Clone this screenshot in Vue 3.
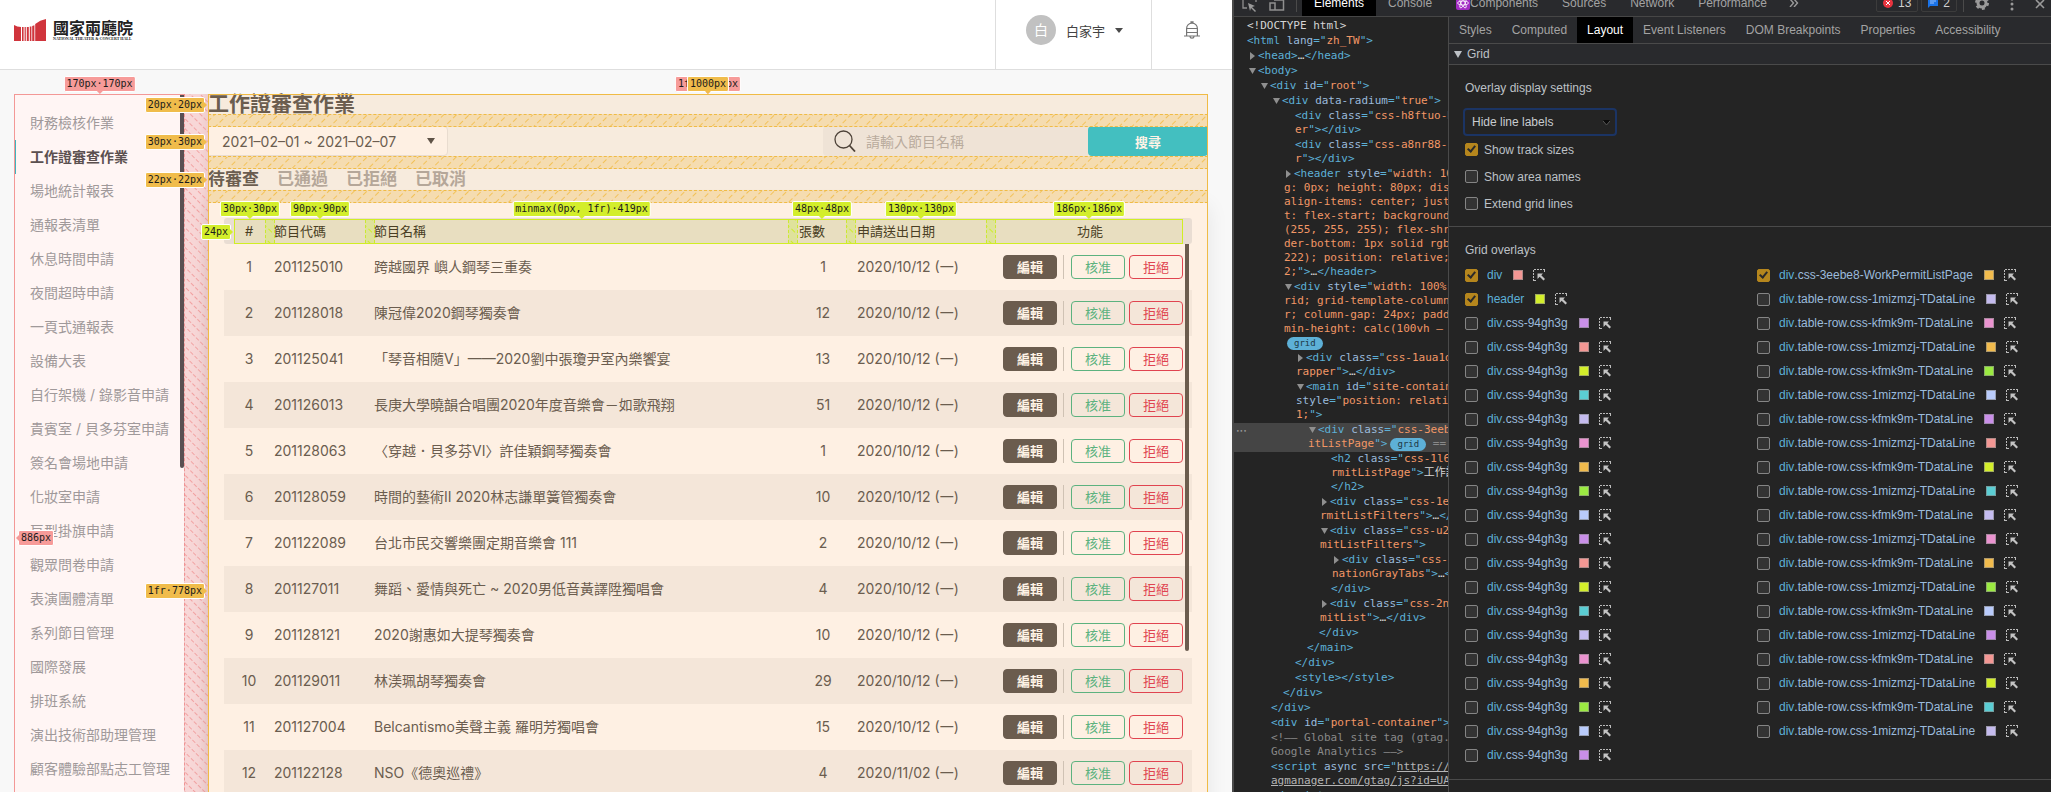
<template>
  <div class="screen">
    <svg class="defs" width="0" height="0" aria-hidden="true">
      <defs>
        <pattern id="hatch-orange" width="9" height="8" patternUnits="userSpaceOnUse" patternTransform="rotate(45)">
          <path d="M4.5 0V5" stroke="#f2c25a" stroke-width="1" />
        </pattern>
        <pattern id="hatch-red" width="7" height="6" patternUnits="userSpaceOnUse" patternTransform="rotate(-45)">
          <path d="M3.5 0V4" stroke="#f2a3a3" stroke-width="1" />
        </pattern>
        <pattern id="hatch-green" width="9" height="8" patternUnits="userSpaceOnUse" patternTransform="rotate(-45)">
          <path d="M4.5 0V5" stroke="#cdee2c" stroke-width="1" />
        </pattern>
      </defs>
    </svg>

    <div class="site">
      <header class="site-head">
        <a class="logo" href="#">
          <svg width="32" height="23" viewBox="0 0 32 23" aria-hidden="true">
            <path fill="#d0343c" d="M0 6q3 2 7 2V22H0zM8 8h1.600v14H8zM10.600 8h1.200v14h-1.200zM12.800 8h2v14h-2zM15.800 7.500h1.600V22h-1.600zM18.200 7l2.200-.8V22h-2.200zM21.200 5Q26 1 32 0v22H21.200z" />
          </svg>
          <span class="logo-text">
            <span class="logo-zh">國家兩廳院</span>
            <span class="logo-en">NATIONAL THEATER &amp; CONCERT HALL</span>
          </span>
        </a>
        <button class="user">
          <span class="avatar">白</span>
          <span>白家宇</span>
          <svg width="8" height="5" viewBox="0 0 8 5" aria-hidden="true"><path d="M0 0h8L4 5z" fill="#4a4a4a" /></svg>
        </button>
        <button class="bell" aria-label="通知">
          <svg width="16" height="18" viewBox="0 0 16 18" fill="none" stroke="#757575" stroke-width="1.2" aria-hidden="true">
            <path d="M2.600 14.500V7.500a5.400 5.400 0 0 1 10.800 0v7M0 15h16M7 2V.8h2V2M3 7.500h10M3 11.500h10M6 15.500a2 1.600 0 0 0 4 0" />
          </svg>
        </button>
      </header>

      <div class="workspace">
        <nav class="side">
          <a v-for="item in menu" :key="item" href="#" :class="{ active: item === current }">{{ item }}</a>
          <i class="thumb side-thumb"></i>
        </nav>
        <div class="col-gap"><svg aria-hidden="true"><rect width="100%" height="100%" fill="url(#hatch-red)" /></svg></div>

        <main class="page">
          <h2>{{ current }}</h2>
          <div class="row-gap"><svg aria-hidden="true"><rect width="100%" height="100%" fill="url(#hatch-orange)" /></svg></div>
          <form class="filters" @submit.prevent>
            <button type="button" class="range">
              2021–02–01 ~ 2021–02–07
              <svg width="8" height="6" viewBox="0 0 8 6" aria-hidden="true"><path d="M0 0h8L4 6z" fill="#5f5347" /></svg>
            </button>
            <label class="search">
              <svg width="22" height="22" viewBox="0 0 22 22" fill="none" stroke="#4d4238" stroke-width="1.300" aria-hidden="true">
                <circle cx="9.500" cy="9.500" r="8.500" /><path d="M15.500 15.500l5.500 6" stroke-width="1.800" />
              </svg>
              <input v-model="keyword" type="text" placeholder="請輸入節目名稱" aria-label="請輸入節目名稱" />
            </label>
            <button class="go">搜尋</button>
          </form>
          <div class="row-gap"><svg aria-hidden="true"><rect width="100%" height="100%" fill="url(#hatch-orange)" /></svg></div>
          <div class="tabs">
            <button v-for="t in tabs" :key="t" :class="{ active: tab === t }" @click="tab = t">{{ t }}</button>
          </div>
          <div class="row-gap"><svg aria-hidden="true"><rect width="100%" height="100%" fill="url(#hatch-orange)" /></svg></div>

          <section class="list">
            <div class="table-wrap">
              <table>
                <thead>
                  <tr><th class="mid">#</th><th>節目代碼</th><th>節目名稱</th><th>張數</th><th>申請送出日期</th><th class="mid">功能</th></tr>
                </thead>
                <tbody>
                  <tr v-for="(r, i) in rows" :key="r[0]">
                    <td class="mid">{{ i + 1 }}</td>
                    <td>{{ r[0] }}</td>
                    <td>{{ r[1] }}</td>
                    <td class="mid">{{ r[2] }}</td>
                    <td>{{ r[3] }} (一)</td>
                    <td class="ops">
                      <button class="edit">編輯</button>
                      <i></i>
                      <button class="ok">核准</button>
                      <button class="no">拒絕</button>
                    </td>
                  </tr>
                </tbody>
              </table>
              <i class="thumb table-thumb"></i>
              <div class="tracks">
                <template v-for="(c, i) in tracks" :key="i">
                  <div v-if="i" class="track-gap"><svg aria-hidden="true"><rect width="100%" height="100%" fill="url(#hatch-green)" /></svg></div>
                  <div class="track"><span class="tag top green">{{ c }}</span></div>
                </template>
                <span class="tag left green">24px</span>
              </div>
            </div>
          </section>

          <div class="frame orange-frame">
            <span class="tag top red">1fr·1000px</span>
            <span class="tag top orange">1000px</span>
            <div class="row-tags">
              <div><span class="tag left orange">20px·20px</span></div>
              <div><span class="tag left orange">30px·30px</span></div>
              <div><span class="tag left orange">22px·22px</span></div>
              <div><span class="tag left orange">1fr·778px</span></div>
            </div>
          </div>
        </main>
        <div class="frame red-frame">
          <span class="tag top red">170px·170px</span>
          <span class="tag right red">886px</span>
        </div>
      </div>
    </div>

    <aside class="devtools">
      <div class="toolbar">
        <svg class="tool" width="16" height="16" viewBox="0 0 16 16" fill="none" stroke="#8f8f8f" stroke-width="1.300" aria-hidden="true">
          <path d="M1 0v8h4M14 0v2" /><path d="M6 3l7 3-3 1 4 4-1 1-4-4-1 3z" fill="#9a9a9a" stroke="none" />
        </svg>
        <svg class="tool" width="16" height="16" viewBox="0 0 16 16" fill="none" stroke="#8f8f8f" stroke-width="1.500" aria-hidden="true">
          <path d="M5 0h9.500v10H5M1 3h5v7H1z" />
        </svg>
        <i class="bar"></i>
        <button v-for="t in panels" :key="t" :class="{ active: t === 'Elements' }">
          <svg v-if="t === 'Components'" width="14" height="14" viewBox="0 0 14 14" fill="none" stroke="#fff" stroke-width="0.800" aria-hidden="true">
            <rect width="14" height="14" rx="2" fill="#a32cc4" stroke="none" />
            <ellipse cx="7" cy="7" rx="5.500" ry="2" /><ellipse cx="7" cy="7" rx="5.500" ry="2" transform="rotate(60 7 7)" /><ellipse cx="7" cy="7" rx="5.500" ry="2" transform="rotate(120 7 7)" />
          </svg>{{ t }}
        </button>
        <button class="more" aria-label="More tabs">
          <svg width="10" height="8" viewBox="0 0 10 8" fill="none" stroke="#9a9a9a" stroke-width="1.400" aria-hidden="true"><path d="M1 0l3.500 4L1 8M5 0l3.500 4L5 8" /></svg>
        </button>
        <span class="count first">
          <svg width="10" height="10" viewBox="0 0 10 10" aria-hidden="true"><circle cx="5" cy="5" r="5" fill="#e8343f" /><path d="M3 3l4 4M7 3L3 7" stroke="#fff" /></svg>13
        </span>
        <span class="count">
          <svg width="10" height="10" viewBox="0 0 10 10" aria-hidden="true"><path d="M0 0h10v8H2L0 10z" fill="#1a73e8" /><path d="M2 3h6M2 5h4" stroke="#9cc2f7" /></svg>2
        </span>
        <i class="bar"></i>
        <svg class="gear" width="14" height="14" viewBox="0 0 14 14" aria-hidden="true">
          <circle cx="7" cy="7" r="4" fill="none" stroke="#9a9a9a" stroke-width="3" />
          <circle cx="7" cy="7" r="6" fill="none" stroke="#9a9a9a" stroke-width="2" stroke-dasharray="3 3.283" />
        </svg>
        <svg class="dots" width="4" height="14" viewBox="0 0 4 14" fill="#9a9a9a" aria-hidden="true"><circle cx="2" cy="2" r="1.500" /><circle cx="2" cy="7" r="1.500" /><circle cx="2" cy="12" r="1.500" /></svg>
        <svg class="close" width="10" height="10" viewBox="0 0 10 10" stroke="#9a9a9a" stroke-width="1.600" aria-hidden="true"><path d="M1 1l8 8M9 1L1 9" /></svg>
      </div>

      <div class="panes">
        <div class="tree">
          <div v-for="(n, i) in nodes" :key="i" class="node" :class="[n.arrow || 'leaf', { sel: n.sel }]" :style="{ paddingLeft: 14 + n.d * 12 + 'px' }">
            <span v-if="n.sel" class="ellipsis">•••</span>
            <div v-for="(l, j) in n.lines" :key="j" class="line"><svg v-if="j === 0 && n.arrow" width="10" height="8" viewBox="0 0 10 8" fill="#8f8f8f" aria-hidden="true"><path :d="n.arrow === 'open' ? 'M1 1h7L4.500 7z' : 'M2 0l5 4-5 4z'" /></svg><span v-for="(p, k) in parts(l)" :key="k" :class="p.kind">{{ p.text }}</span></div>
          </div>
        </div>

        <div class="inspector">
          <div class="subtabs">
            <button v-for="t in subtabs" :key="t" :class="{ active: t === 'Layout' }">{{ t }}</button>
          </div>
          <div class="group">
            <svg width="8" height="8" viewBox="0 0 8 8" fill="#bdc1c6" aria-hidden="true"><path d="M0 1h8L4 8z" /></svg>Grid
          </div>
          <div class="settings">
            <h3>Overlay display settings</h3>
            <div class="picker">
              <select aria-label="Line labels"><option>Hide line labels</option></select>
              <svg width="7" height="5" viewBox="0 0 7 5" aria-hidden="true"><path d="M0 0h7L3.500 5z" fill="#0b0b0b" /><path d="M0 1l3.500 4L7 1" stroke="#555" fill="none" /></svg>
            </div>
            <label v-for="o in options" :key="o.text" class="check"><input v-model="o.on" type="checkbox" />{{ o.text }}</label>
          </div>
          <div class="overlays">
            <h3>Grid overlays</h3>
            <div class="cols">
              <ul v-for="(list, c) in overlays" :key="c">
                <li v-for="(o, i) in list" :key="i">
                  <label><input v-model="o.on" type="checkbox" /><span class="t">{{ o.tag }}</span><span class="a">{{ o.cls }}</span></label>
                  <i class="swatch" :style="{ background: o.color }"></i>
                  <svg width="12" height="12" viewBox="0 0 12 12" aria-hidden="true">
                    <path d="M.5 12V.5H12" fill="none" stroke="#bbb" stroke-dasharray="2 1" />
                    <path d="M11.500 1v3M1 11.500h3" stroke="#bbb" stroke-dasharray="2 1" />
                    <path d="M4.500 4.500h5.500L8.300 6.200 12 10l-1.500 1.500L6.700 7.700 4.500 10z" fill="#c4c4c4" />
                  </svg>
                </li>
              </ul>
            </div>
          </div>
        </div>
      </div>
    </aside>
  </div>
</template>

<script setup>
import { ref, reactive } from 'vue'

const current = '工作證審查作業'
const keyword = ref('')
const tab = ref('待審查')
const tabs = ['待審查', '已通過', '已拒絕', '已取消']
const menu = [
  '財務檢核作業', '工作證審查作業', '場地統計報表', '通報表清單', '休息時間申請', '夜間超時申請', '一頁式通報表',
  '設備大表', '自行架機 / 錄影音申請', '貴賓室 / 貝多芬室申請', '簽名會場地申請', '化妝室申請', '巨型掛旗申請',
  '觀眾問卷申請', '表演團體清單', '系列節目管理', '國際發展', '排班系統', '演出技術部助理管理', '顧客體驗部點志工管理',
]
const tracks = ['30px·30px', '90px·90px', 'minmax(0px, 1fr)·419px', '48px·48px', '130px·130px', '186px·186px']
const rows = [
  ['201125010', '跨越國界 嶼人鋼琴三重奏', 1, '2020/10/12'],
  ['201128018', '陳冠偉2020鋼琴獨奏會', 12, '2020/10/12'],
  ['201125041', '「琴音相隨V」——2020劉中張瓊尹室內樂饗宴', 13, '2020/10/12'],
  ['201126013', '長庚大學曉韻合唱團2020年度音樂會－如歌飛翔', 51, '2020/10/12'],
  ['201128063', '〈穿越．貝多芬VI〉許佳穎鋼琴獨奏會', 1, '2020/10/12'],
  ['201128059', '時間的藝術II 2020林志謙單簧管獨奏會', 10, '2020/10/12'],
  ['201122089', '台北市民交響樂團定期音樂會 111', 2, '2020/10/12'],
  ['201127011', '舞蹈、愛情與死亡 ~ 2020男低音黃譯陞獨唱會', 4, '2020/10/12'],
  ['201128121', '2020謝惠如大提琴獨奏會', 10, '2020/10/12'],
  ['201129011', '林渼珮胡琴獨奏會', 29, '2020/10/12'],
  ['201127004', 'Belcantismo美聲主義 羅明芳獨唱會', 15, '2020/10/12'],
  ['201122128', 'NSO《德奧巡禮》', 4, '2020/11/02'],
]

const panels = ['Elements', 'Console', 'Components', 'Sources', 'Network', 'Performance']
const subtabs = ['Styles', 'Computed', 'Layout', 'Event Listeners', 'DOM Breakpoints', 'Properties', 'Accessibility']
const options = reactive([
  { text: 'Show track sizes', on: true },
  { text: 'Show area names', on: false },
  { text: 'Extend grid lines', on: false },
])

const palette = ['#c98fe8', '#f39794', '#d3ee2b', '#5bcdd3', '#c4bbee', '#ea93cf', '#f1bb4d', '#9bea42', '#b9cbfb']
const overlays = reactive([
  [
    { tag: 'div', cls: '', color: palette[1], on: true },
    { tag: 'header', cls: '', color: palette[2], on: true },
    ...Array.from({ length: 19 }, (_, i) => ({ tag: 'div', cls: '.css-94gh3g', color: palette[i % 9], on: false })),
  ],
  [
    { tag: 'div', cls: '.css-3eebe8-WorkPermitListPage', color: palette[6], on: true },
    ...Array.from({ length: 19 }, (_, i) => ({
      tag: 'div',
      cls: `.table-row.css-${i % 2 ? 'kfmk9m' : '1mizmzj'}-TDataLine`,
      color: palette[(i + 4) % 9],
      on: false,
    })),
  ],
])

// first letter of each piece is its kind: t tag, a attribute, v value, x text, c comment, l link, b badge
const kinds = { t: 't', a: 'a', v: 'v', x: 'x', c: 'c', l: 'l', b: 'pill' }
const parts = (line) => line.split('|').map((p) => ({ kind: kinds[p[0]], text: p.slice(1) }))

const nodes = [
  { d: -1, lines: ['x<!DOCTYPE html>'] },
  { d: -1, lines: ['t<html |alang|t="|vzh_TW|t">'] },
  { d: 0, arrow: 'shut', lines: ['t<head>|x…|t</head>'] },
  { d: 0, arrow: 'open', lines: ['t<body>'] },
  { d: 1, arrow: 'open', lines: ['t<div |aid|t="|vroot|t">'] },
  { d: 2, arrow: 'open', lines: ['t<div |adata-radium|t="|vtrue|t">'] },
  { d: 3, lines: ['t<div |aclass|t="|vcss-h8ftuo-H', 'ver|t"></div>'] },
  { d: 3, lines: ['t<div |aclass|t="|vcss-a8nr88-', 'vr|t"></div>'] },
  {
    d: 3,
    arrow: 'shut',
    lines: [
      't<header |astyle|t="|vwidth: 100',
      'vg: 0px; height: 80px; disp',
      'valign-items: center; justi',
      'vt: flex-start; background:',
      'v(255, 255, 255); flex-shri',
      'vder-bottom: 1px solid rgb(',
      'v222); position: relative;',
      'v2;|t">|x…|t</header>',
    ],
  },
  {
    d: 3,
    arrow: 'open',
    lines: ['t<div |astyle|t="|vwidth: 100%;', 'vrid; grid-template-columns', 'vr; column-gap: 24px; paddi', 'vmin-height: calc(100vh –', 'bgrid'],
  },
  { d: 4, arrow: 'shut', lines: ['t<div |aclass|t="|vcss-1aua1d', 'vrapper|t">|x…|t</div>'] },
  { d: 4, arrow: 'open', lines: ['t<main |aid|t="|vsite-contain', 'astyle|t="|vposition: relati', 'v1;|t">'] },
  { d: 5, arrow: 'open', sel: true, lines: ['t<div |aclass|t="|vcss-3eeb', 'vitListPage|t">|bgrid|c =='] },
  { d: 6, lines: ['t<h2 |aclass|t="|vcss-1l6', 'vrmitListPage|t">|x工作證', 't</h2>'] },
  { d: 6, arrow: 'shut', lines: ['t<div |aclass|t="|vcss-1e', 'vrmitListFilters|t">|x…|t</'] },
  { d: 6, arrow: 'open', lines: ['t<div |aclass|t="|vcss-u2', 'vmitListFilters|t">'] },
  { d: 7, arrow: 'shut', lines: ['t<div |aclass|t="|vcss-', 'vnationGrayTabs|t">|x…|t<'] },
  { d: 6, lines: ['t</div>'] },
  { d: 6, arrow: 'shut', lines: ['t<div |aclass|t="|vcss-2n', 'vmitList|t">|x…|t</div>'] },
  { d: 5, lines: ['t</div>'] },
  { d: 4, lines: ['t</main>'] },
  { d: 3, lines: ['t</div>'] },
  { d: 3, lines: ['t<style></style>'] },
  { d: 2, lines: ['t</div>'] },
  { d: 1, lines: ['t</div>'] },
  { d: 1, lines: ['t<div |aid|t="|vportal-container|t">'] },
  { d: 1, lines: ['c<!–– Global site tag (gtag.', 'cGoogle Analytics ––>'] },
  { d: 1, lines: ['t<script |aasync src|t="|lhttps://', 'lagmanager.com/gtag/js?id=UA'] },
  { d: 1, lines: ['t<\/script>'] },
]
</script>

<style>
body{margin:0;background:#f8f8f8}
</style>

<style scoped>
*{box-sizing:border-box}
button{font:inherit;color:inherit;background:none;border:0;padding:0;cursor:pointer}
a{text-decoration:none;color:inherit}
svg{display:block;flex:none}
.defs{position:absolute}
.screen{display:grid;grid-template-columns:minmax(0,1232fr) minmax(0,819fr);height:100vh;overflow:hidden;font-family:Inter,"Noto Sans CJK TC",sans-serif;font-size:14px}

/* site */
.site{overflow:hidden;background:#f8f8f8}
.site-head{display:flex;height:70px;background:#fff;border-bottom:1px solid #dedede}
.logo{display:flex;align-items:flex-start;gap:7px;margin-right:auto;padding:19px 0 0 14px}
.logo-text{display:flex;flex-direction:column;color:#222}
.logo-zh{font:700 16px/17px "Noto Sans CJK TC",sans-serif}
.logo-en{font:700 4px/6px "Liberation Serif",serif;white-space:nowrap}
.user{display:flex;align-items:center;gap:10px;width:156px;padding:0 0 9px 30px;border-left:1px solid #dedede;font-size:13px;color:#444}
.avatar{width:30px;height:30px;border-radius:50%;background:#c1c1c1;color:#fff;line-height:30px;font-size:14px}
.bell{display:flex;align-items:center;justify-content:center;width:81px;padding-bottom:9px;border-left:1px solid #dedede}
.workspace{position:relative;display:grid;grid-template-columns:170px 24px minmax(0,1fr);min-height:886px;margin:24px 24px 0 14px}

.side{position:relative;display:flex;flex-direction:column;padding-top:12px;background:#fff5f4}
.side a{height:34px;line-height:34px;padding-left:16px;white-space:nowrap;color:#a0999a}
.side a.active{color:#5b5050;font-weight:700;border-left:2px solid #3fb5bd;padding-left:14px}
.thumb{position:absolute;width:4px;border-radius:0 0 2px 2px}
.side-thumb{right:0;top:1px;height:373px;background:#5a5052}
.col-gap{background:linear-gradient(90deg,#f8d7d7 60%,#efcdcd);border-left:1px dashed #f09494}
.col-gap svg,.row-gap svg,.track-gap svg{width:100%;height:100%}

.page{position:relative;display:grid;grid-template-rows:20px 12px 30px 12px 22px 12px 1fr;background:#f7ebdd;color:#6b5d4f}
.page h2{margin:0;font-size:21px;line-height:20px;font-weight:700}
.row-gap{position:relative;z-index:1;margin-bottom:-1px;background:#f5dcb0;border:dashed #f0bb45;border-width:1px 0;overflow:hidden}
.filters{display:flex}
.range{display:flex;align-items:center;justify-content:space-between;width:240px;margin-right:auto;padding:0 12px 0 13px;background:#fef0e3;border:1px solid #e9dccf;border-radius:0 4px 4px 0;white-space:nowrap}
.search{display:flex;align-items:center;gap:10px;width:265px;padding-left:11px;background:#efe3d6;border-radius:4px 0 0 4px}
.search input{flex:1;min-width:0;padding:0;border:0;outline:0;background:none;font:inherit;color:inherit}
.search input::placeholder{color:#b9ab9d}
.go{width:120px;background:#43bfc0;border-radius:4px;color:#fff3e6;font-size:13px;font-weight:700}
.tabs{display:flex;gap:18px;font-size:17px;line-height:20px;font-weight:700;color:#b5a799}
.tabs .active{color:#6b5d4f}

.list{padding:16px 16px 0;background:#fef0e3;box-shadow:0 4px 20px rgba(0,0,0,.08)}
.table-wrap{position:relative}
table,thead,tbody{display:block}
tr,.tracks{display:grid;grid-template-columns:30px 90px minmax(0,1fr) 48px 130px 186px;column-gap:10px;align-items:center;padding:0 9px 0 10px}
thead tr{height:26px;background:#e9ddd3;border-radius:3px;color:#4a3e24}
th{position:relative;z-index:2;padding:0;text-align:left;font-size:13px;line-height:24px;font-weight:400}
tbody tr{height:46px}
tbody tr:nth-child(even){background:#f4e6d9}
td{padding:0;line-height:22px;white-space:nowrap}
.mid{text-align:center}
.ops{display:flex;align-items:center;justify-content:flex-end;gap:4px;font-size:13px}
.ops button{width:54px;height:24px;border:1px solid;border-radius:4px;line-height:20px}
.ops i{width:1px;height:24px;margin:0 3px 0 2px;background:#cfc2b4}
.ops .edit{background:#6b5c4e;border-color:#6b5c4e;color:#fff3e6;font-weight:700}
.ok{color:#5cb27f}
.no{color:#e04450}
.table-thumb{right:3px;top:26px;height:407px;background:#6b5c4e}

/* grid overlay */
.tracks{position:absolute;top:1px;left:10px;right:9px;height:25px;padding:0;column-gap:0;align-items:stretch;grid-template-columns:30px 10px 90px 10px minmax(0,1fr) 10px 48px 10px 130px 10px 186px;grid-template-rows:minmax(0,1fr);background:#e8dec0;border:1px solid #d1ee24;pointer-events:none}
.track{position:relative}
.track-gap{min-height:0;overflow:hidden;background:#dfe29b;border:dashed #cbe933;border-width:0 1px}
.frame{position:absolute;pointer-events:none}
.red-frame{inset:0 auto 0 0;width:170px;border:solid #f39896;border-width:1px 0 0 1px}
.orange-frame{inset:0;z-index:2;border:1px solid #f0bb45}
.row-tags{display:grid;grid-template-rows:20px 30px 22px 1fr;row-gap:12px;height:100%}
.row-tags div{position:relative}
.tag{position:absolute;z-index:3;padding:0 2px;border:1px solid #fff;border-radius:2px;font:10px/14px "DejaVu Sans Mono",monospace;color:#1b1b1b;white-space:nowrap}
.tag::after{content:"";position:absolute;border:3px solid transparent}
.top{left:50%;bottom:100%;margin-bottom:3px;transform:translateX(-50%)}
.top::after{top:100%;left:50%;margin-left:-3px}
.left{right:100%;top:50%;margin-right:4px;transform:translateY(-50%)}
.left::after{left:100%;top:50%;margin-top:-3px}
.right{left:3px;top:50%;transform:translateY(-50%)}
.right::after{right:100%;top:50%;margin-top:-3px;border-right-color:#f39896}
.green{background:#d3ee2b}
.orange{background:#f0bc4b}
.red{background:#f79b99}
.top.green::after{border-top-color:#d3ee2b}
.top.orange::after{border-top-color:#f0bc4b}
.top.red::after{border-top-color:#f79b99}
.left.green::after{border-left-color:#d3ee2b}
.left.orange::after{border-left-color:#f0bc4b}

/* devtools */
.devtools{display:flex;flex-direction:column;min-width:0;background:#242424;border-left:2px solid #4a4a4a;color:#bdc1c6;font:12px/16px "Liberation Sans",Arial,sans-serif;overflow:hidden}
.toolbar{display:flex;align-items:flex-end;height:17px;flex:none;padding:0 6px 0 8px;background:#292a2d;border-bottom:1px solid #464646;overflow:hidden}
.tool{margin-right:11px}
.bar{width:1px;height:12px;align-self:flex-start;background:#4a4a4a}
.toolbar .bar + button{margin-left:5px}
.toolbar button{display:flex;align-items:center;height:26px;padding:0 12px;color:#a3a3a3}
.toolbar .active,.subtabs .active{background:#000;color:#fff}
.toolbar .more{padding:0 10px}
.count{display:flex;align-items:center;gap:5px;height:18px;margin:0 3px 4px 0;padding:0 6px;border:1px solid #3c3c3c;border-radius:2px;color:#d0d0d0}
.count.first{margin-left:auto}
.count + .bar{margin:0 11px 0 3px}
.gear{margin-bottom:6px}
.dots{margin:0 21px 5px}
.close{margin-bottom:7px}
.panes{flex:1;display:flex;min-height:0}
.tree{width:215px;flex:none;padding-top:2px;border-right:1px solid #4a4a4a;overflow:hidden;font:11px/14px "DejaVu Sans Mono","Noto Sans CJK TC",monospace}
.node{position:relative;padding-bottom:1px}
.node.sel{background:#454545}
.ellipsis{position:absolute;left:2px;top:1px;font-size:6px;color:#9a9a9a}
.line{display:flex;align-items:center;height:14px;white-space:pre}
.leaf .line{padding-left:11px}
.t{color:#5db0d7}
.a{color:#9bbbdc}
.v{color:#f29766}
.x{color:#d5d5d5}
.c{color:#898989}
.l{color:#b5b5b5;text-decoration:underline}
.pill{height:13px;margin-left:3px;padding:0 7px;border-radius:7px;background:#5db0d7;color:#1d3644;font-size:9px;line-height:13px}
.inspector{flex:1;min-width:0}
.subtabs{display:flex;height:27px;padding:0;background:#292a2d;border-bottom:1px solid #4a4a4a;white-space:nowrap;overflow:hidden}
.subtabs button{padding:0 10px;color:#a3a3a3}
.group{display:flex;align-items:center;gap:5px;height:21px;padding-left:5px;background:#292a2d;border-bottom:1px solid #4a4a4a}
.settings{height:162px;padding:15px 16px 0;border-bottom:1px solid #4a4a4a}
h3{margin:0;font-size:12px;line-height:16px;font-weight:500}
.picker{position:relative;width:154px;margin:12px 0 0 -2px}
.picker select{width:100%;height:28px;padding:0 7px;appearance:none;background:#242424;border:2px solid #1b3464;border-radius:4px;outline:0;font:inherit;color:#c8ccd0}
.picker svg{position:absolute;right:7px;top:12px}
.check{display:flex;align-items:center;gap:6px;height:27px}
input[type=checkbox]{flex:none;appearance:none;position:relative;width:13px;height:13px;margin:0;background:#333;border:1px solid #858585;border-radius:2px}
input[type=checkbox]:checked{background:#b5861d;border-color:#b5861d}
input[type=checkbox]:checked::after{content:"";position:absolute;left:3px;top:0;width:3px;height:6px;border:solid #2a2a2a;border-width:0 2px 2px 0;transform:rotate(40deg);box-sizing:content-box}
.overlays{padding:15px 2px 12px 16px;border-bottom:1px solid #4a4a4a}
.cols{display:grid;grid-template-columns:1fr 1fr;margin-top:5px}
ul{list-style:none;margin:0;padding:0}
li{display:flex;align-items:center;height:24px;white-space:nowrap}
li label{display:flex;align-items:center}
li input[type=checkbox]{margin-right:9px}
.swatch{width:10px;height:10px;margin:0 10px 0 11px;border:1px solid rgba(130,130,130,.6)}
</style>
